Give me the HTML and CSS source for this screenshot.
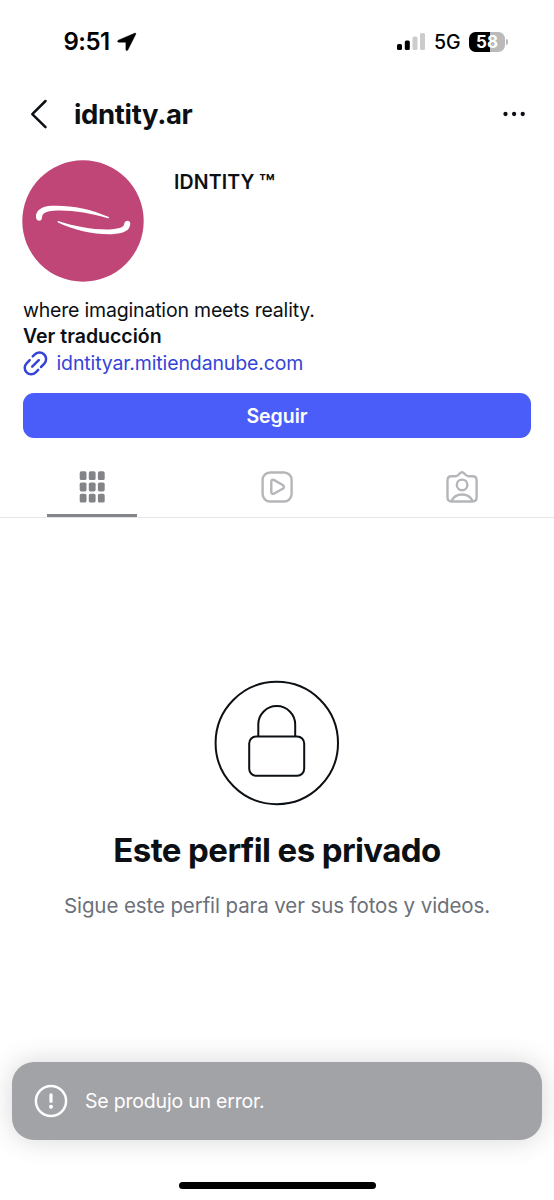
FILE: index.html
```html
<!DOCTYPE html>
<html lang="es">
<head>
<meta charset="utf-8">
<meta name="viewport" content="width=device-width, initial-scale=1">
<title>idntity.ar</title>
<link rel="stylesheet" href="styles.css">
</head>
<body>
<div class="screen">
  <div class="status">
    <div class="clock">
      <span class="time">9:51</span>
      <svg class="location" width="20" height="20" viewBox="0 0 20 20"><path d="M17.700 1.200 1.400 8.200c-1.300.6-.9 2 .4 2h7.100v7.200c0 1.400 1.500 1.600 2 .4L18.700 2.300c.4-.8-.2-1.400-1-1.100z" fill="#000" stroke="#000" stroke-width=".5"/></svg>
    </div>
    <div class="signals">
      <svg width="28" height="19" viewBox="0 0 28 19">
        <rect x="0" y="12" width="5" height="6" rx="1.500" fill="#000"/>
        <rect x="7.800" y="8.500" width="5" height="9.500" rx="1.500" fill="#000"/>
        <rect x="15.500" y="4.500" width="5" height="13.500" rx="1.500" fill="#ccc"/>
        <rect x="23" y="1" width="5" height="17" rx="1.500" fill="#ccc"/>
      </svg>
      <span class="network">5G</span>
      <div class="battery"><span class="level">58</span></div>
      <span class="battery-tip"></span>
    </div>
  </div>

  <header class="header">
    <svg class="back" width="20" height="32" viewBox="0 0 20 32"><path d="M16.500 3 3.300 16.200 16.500 29.200" fill="none" stroke="#0c1014" stroke-width="2.500" stroke-linecap="round" stroke-linejoin="round"/></svg>
    <h1 class="username">idntity.ar</h1>
    <svg class="more" width="24" height="6" viewBox="0 0 24 6" fill="#0c1014"><circle cx="3.500" cy="3" r="2.150"/><circle cx="12.100" cy="3" r="2.150"/><circle cx="20.700" cy="3" r="2.150"/></svg>
  </header>

  <section class="profile">
    <svg class="avatar" width="122" height="122" viewBox="0 0 122 122">
      <circle cx="61" cy="61" r="60.700" fill="#c04677"/>
      <g fill="#fff">
        <path d="M14 57.300C13.500 50.500 19.500 46.300 30 45.800C48 45.100 68 48.600 86.800 57.100Q87.800 58.500 86 58.300C68 52.900 50 50 34.500 50.600C26 51 20.300 52.500 20 57.300C20.200 62 14.300 62 14 57.300Z"/>
        <path d="M36.200 61C54 66.800 71 69.700 87 69.400C97 68.900 102.100 67.400 102.300 63.500C103 59.600 108.400 59.700 108.300 63.800C108 70.500 101.500 73.800 90 74.200C72 74.700 53 70.700 36 62.600Q34.800 61.200 36.200 61Z"/>
      </g>
    </svg>
    <h2 class="name">IDNTITY <span class="mark">™</span></h2>
  </section>

  <section class="bio">
    <p class="bio-text">where imagination meets reality.</p>
    <p class="translate">Ver traducción</p>
    <div class="link">
      <svg width="25" height="25" viewBox="0 0 25 25" fill="none" stroke="#3544d8" stroke-width="2.500" stroke-linecap="round">
        <path d="M9.200 15.700 15.800 9.100"/>
        <path d="M9.800 5.300 11.500 3.600A6.400 6.400 0 0 1 21.300 12.700L18 16"/>
        <path d="M6.700 9.200 3.600 12.300A6.400 6.400 0 0 0 12.700 21.400L15.200 18.900"/>
      </svg>
      <span>idntityar.mitiendanube.com</span>
    </div>
  </section>

  <button class="follow">Seguir</button>

  <nav class="tabs">
    <div class="tab active">
      <svg width="26" height="32" viewBox="0 0 26 32" fill="#838487">
        <rect x=".7" y=".2" width="6.800" height="8.900" rx="1.700"/><rect x="9.800" y=".2" width="6.800" height="8.900" rx="1.700"/><rect x="18.900" y=".2" width="6.800" height="8.900" rx="1.700"/>
        <rect x=".7" y="11.500" width="6.800" height="8.900" rx="1.700"/><rect x="9.800" y="11.500" width="6.800" height="8.900" rx="1.700"/><rect x="18.900" y="11.500" width="6.800" height="8.900" rx="1.700"/>
        <rect x=".7" y="22.700" width="6.800" height="8.900" rx="1.700"/><rect x="9.800" y="22.700" width="6.800" height="8.900" rx="1.700"/><rect x="18.900" y="22.700" width="6.800" height="8.900" rx="1.700"/>
      </svg>
    </div>
    <div class="tab">
      <svg width="32" height="32" viewBox="0 0 32 32" fill="none" stroke="#b4b6b9" stroke-width="2.400" stroke-linejoin="round">
        <rect x="1.600" y="1.500" width="29" height="29" rx="7.500"/>
        <path d="M10.300 10.700C10.300 8.800 11.700 8.300 13.200 9.100L21.700 14C23.300 15 23.300 16.800 21.700 17.700L13.200 22.500C11.600 23.400 10.300 22.600 10.300 20.900Z"/>
      </svg>
    </div>
    <div class="tab">
      <svg width="32" height="32" viewBox="0 0 32 32" fill="none" stroke="#b4b6b9" stroke-width="2.400" stroke-linejoin="round">
        <path d="M5.500 5.200H9.300C11 5.200 11.900 4.500 13 3.200L14.500 1.900Q16 .8 17.500 1.900L19 3.200C20.200 4.500 21 5.200 22.700 5.200H26.500Q30.600 5.200 30.600 9.200V26.500Q30.600 30.500 26.500 30.500H5.500Q1.500 30.500 1.500 26.500V9.200Q1.500 5.200 5.500 5.200Z"/>
        <circle cx="16.100" cy="13.900" r="5.300"/>
        <path d="M5.400 30C9.500 21.300 22.500 21.300 26.700 30"/>
      </svg>
    </div>
  </nav>

  <main class="private">
    <svg width="126" height="126" viewBox="0 0 126 126" fill="none" stroke="#0c1014" stroke-width="2">
      <circle cx="62.800" cy="63" r="61.200"/>
      <rect x="35.200" y="56.400" width="55" height="39.400" rx="7"/>
      <path d="M44.300 56.400V44.500A18.300 18.300 0 0 1 81.200 44.500V56.400"/>
    </svg>
    <h2 class="private-title">Este perfil es privado</h2>
    <p class="private-text">Sigue este perfil para ver sus fotos y videos.</p>
  </main>

  <div class="toast">
    <svg width="34" height="34" viewBox="0 0 34 34" fill="none" stroke="#fff"><circle cx="17" cy="17" r="15.100" stroke-width="2.500"/><path d="M17 10.800V17.300" stroke-width="3.200" stroke-linecap="round"/><circle cx="17" cy="22.800" r="2" fill="#fff" stroke="none"/></svg>
    <span>Se produjo un error.</span>
  </div>
  <div class="home-bar"></div>
</div>
</body>
</html>
```
FILE: styles.css
```css
* { box-sizing: border-box; }
body { margin: 0; background: #fff; color: #0c1014; font-family: Inter, "Liberation Sans", sans-serif; }
h1, h2, p { margin: 0; white-space: nowrap; }
.screen { width: 554px; height: 1200px; display: flex; flex-direction: column; overflow: hidden; }

.status { height: 83px; flex: none; display: flex; justify-content: space-between; align-items: center; padding: 0 46px 0 63.5px; color: #000; }
.clock { display: flex; align-items: center; gap: 5px; }
.time { width: 48px; font-size: 24px; font-weight: 600; letter-spacing: -0.5px; line-height: 28px; }
.signals { display: flex; align-items: center; }
.network { width: 27px; margin: 1px 8px 0 9px; font-size: 19.5px; font-weight: 500; line-height: 24px; }
.battery { width: 36px; height: 20px; border-radius: 6.5px; background: linear-gradient(90deg, #000 58%, #bababa 58%); display: flex; align-items: center; justify-content: center; }
.level { color: #fff; font-size: 17px; font-weight: 700; line-height: 20px; }
.battery-tip { width: 2px; height: 6px; margin-left: 1px; border-radius: 0 2px 2px 0; background: #bababa; }

.header { height: 62px; flex: none; display: flex; align-items: center; padding: 0 28px 0 29px; }
.username { margin: 0 0 1px 25px; font-size: 27.5px; font-weight: 700; letter-spacing: -0.35px; line-height: 32px; }
.more { margin-left: auto; }

.profile { height: 137px; flex: none; display: flex; padding: 15px 22px 0; }
.name { margin: 9px 0 0 30px; font-size: 19.5px; font-weight: 600; letter-spacing: 0.15px; line-height: 26px; }
.mark { margin-left: -1px; font-size: 26px; line-height: 20px; vertical-align: -4px; }

.bio { height: 111px; flex: none; padding: 15px 23px 0; font-size: 19.5px; }
.bio-text, .translate { line-height: 26px; }
.bio-text { letter-spacing: -0.19px; }
.translate { font-weight: 600; }
.link { height: 28px; display: flex; align-items: center; gap: 8.5px; color: #3544d8; letter-spacing: -0.13px; }

.follow { height: 45px; flex: none; margin: 0 23px; padding: 1px 0 0; border: 0; border-radius: 11px; background: #4a5df9; color: #fff; font: 600 19.5px/44px Inter, "Liberation Sans", sans-serif; }

.tabs { height: 80px; flex: none; display: grid; grid-template-columns: repeat(3, 1fr); border-bottom: 1px solid #e4e5e7; }
.tab { display: flex; justify-content: center; padding-top: 33px; }
.active { width: 90px; justify-self: center; border-bottom: 3px solid #838487; }

.private { height: 544px; flex: none; display: flex; flex-direction: column; align-items: center; padding-top: 162px; }
.private-title { margin-top: 24px; font-size: 33px; font-weight: 700; letter-spacing: -0.6px; line-height: 40px; }
.private-text { margin-top: 23px; color: #6b7079; font-size: 20.5px; letter-spacing: -0.1px; line-height: 26px; }

.toast { height: 78px; flex: none; margin: 0 12px; padding: 0 22px; border-radius: 22px; background: #a2a3a6; color: #fff; display: flex; align-items: center; gap: 17px; font-size: 19.5px; letter-spacing: -0.2px; box-shadow: 0 0 28px rgba(0, 0, 0, .16); }
.home-bar { width: 197px; height: 7px; flex: none; margin: 42px auto 0; border-radius: 4px; background: #000; }
```
